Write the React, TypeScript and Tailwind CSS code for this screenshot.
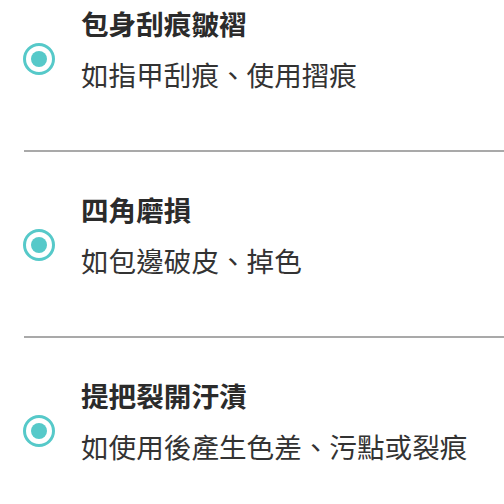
import React from "react";

const items = [
  { title: "包身刮痕皺褶", desc: "如指甲刮痕、使用摺痕" },
  { title: "四角磨損", desc: "如包邊破皮、掉色" },
  { title: "提把裂開汙漬", desc: "如使用後產生色差、污點或裂痕" },
];

function Radio() {
  return (
    <div className="mt-[43px] flex h-[32px] w-[32px] shrink-0 items-center justify-center rounded-full border-[3px] border-[#56c9c9]">
      <div className="h-[16px] w-[16px] rounded-full bg-[#56c9c9]" />
    </div>
  );
}

export default function App() {
  return (
    <div
      className="flex h-[504px] w-[504px] flex-col overflow-hidden bg-white"
      style={{ fontFamily: '"Noto Sans CJK TC", "Noto Sans", sans-serif' }}
    >
      {items.map((it, i) => (
        <div key={i} className="flex flex-col">
          <div className="flex flex-row pl-[23px]">
            <Radio />
            <div className="ml-[26px] flex flex-col whitespace-nowrap">
              <div className="text-[27.6px] font-bold leading-[47px] text-[#2b2b2b]">{it.title}</div>
              <div className="mt-[2px] text-[27.6px] leading-[51px] text-[#333333]">{it.desc}</div>
            </div>
          </div>
          {i < items.length - 1 && (
            <div className="mb-[34px] ml-[24px] mt-[50px] h-[2px] bg-[#a9a9a9]" />
          )}
        </div>
      ))}
    </div>
  );
}
